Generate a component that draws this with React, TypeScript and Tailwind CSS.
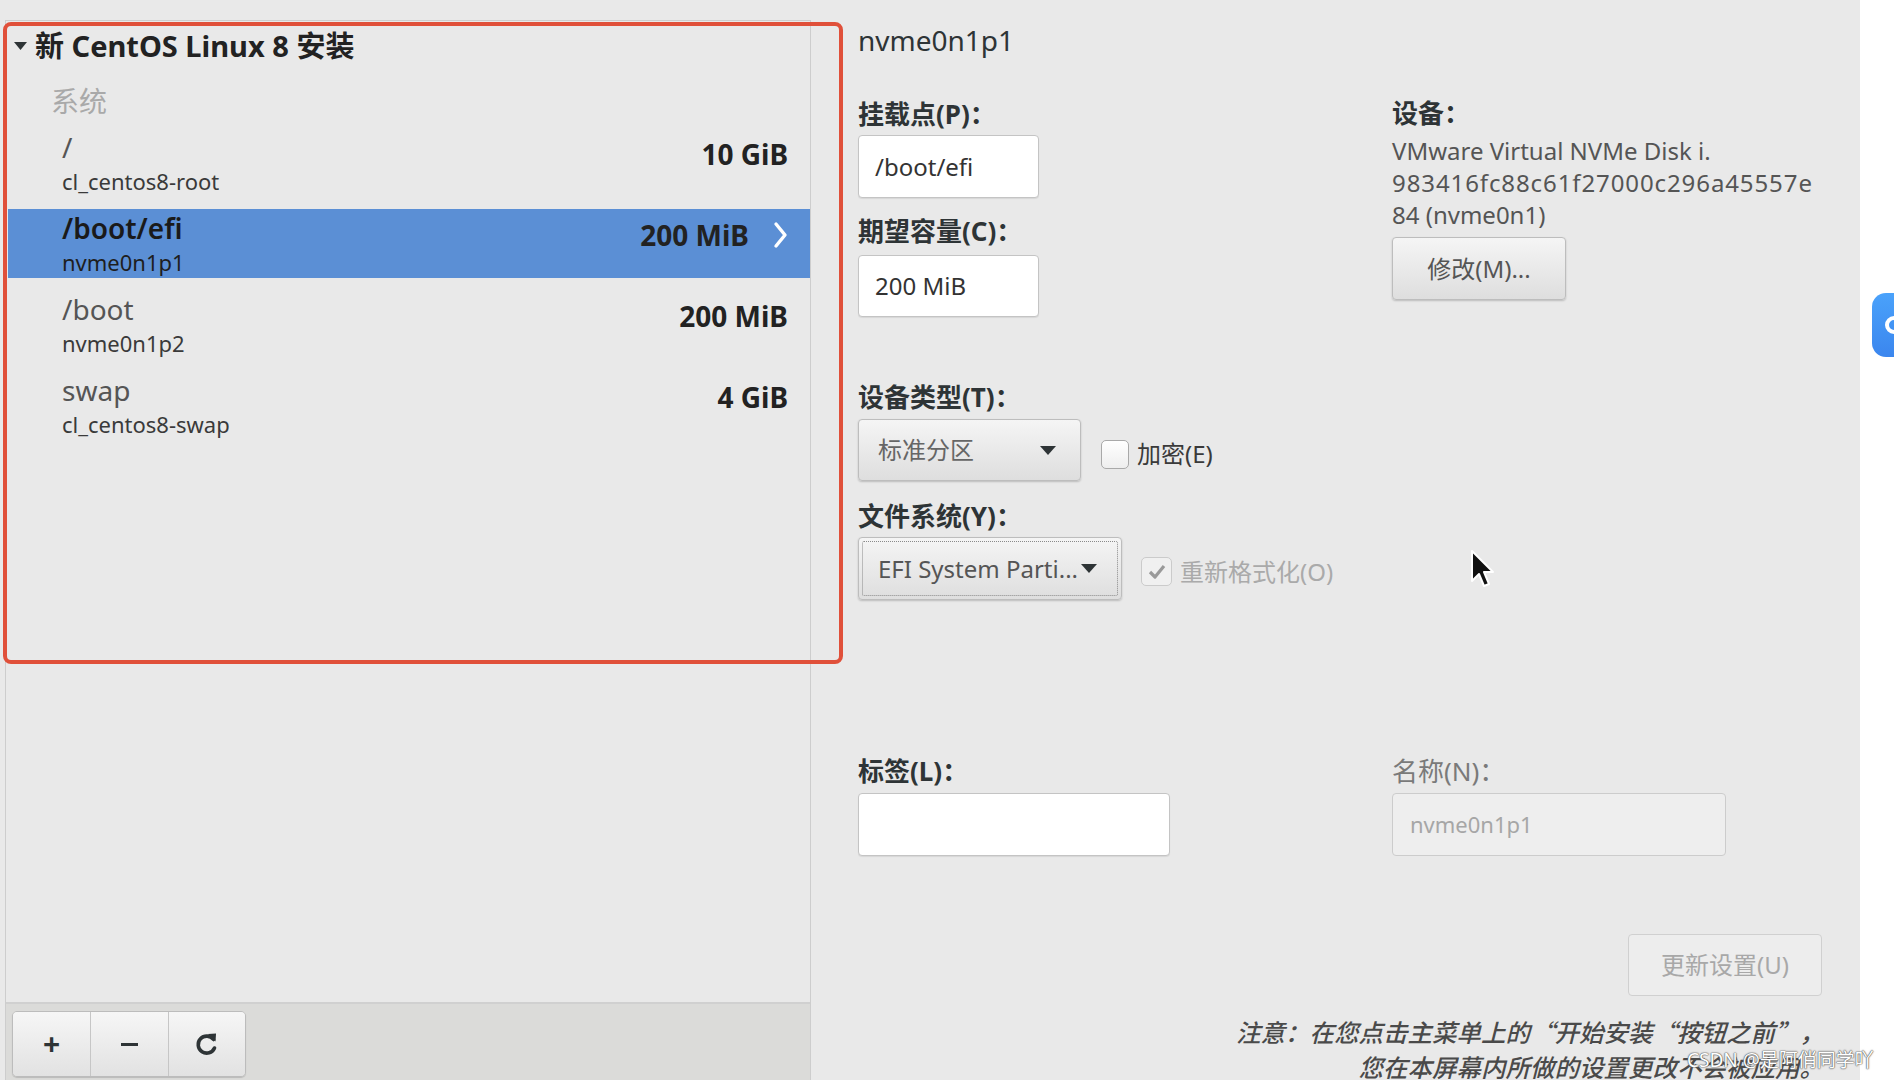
import React from 'react';

type Part = { mount: string; dev: string; size: string; selected?: boolean };

const parts: Part[] = [
  { mount: '/', dev: 'cl_centos8-root', size: '10 GiB' },
  { mount: '/boot/efi', dev: 'nvme0n1p1', size: '200 MiB', selected: true },
  { mount: '/boot', dev: 'nvme0n1p2', size: '200 MiB' },
  { mount: 'swap', dev: 'cl_centos8-swap', size: '4 GiB' },
];

function Caret() {
  return (
    <svg width="16" height="9" viewBox="0 0 16 9" className="shrink-0">
      <path d="M0 0 L16 0 L8 9 Z" fill="#2e3436" />
    </svg>
  );
}

function Refresh() {
  return (
    <svg width="24" height="26" viewBox="0 0 24 26" fill="none">
      <path d="M18.5 8.5 A8.5 8.5 0 1 0 19.5 17" stroke="#2e3436" strokeWidth="3.6" strokeLinecap="round" />
      <path d="M13 3 L21 2.5 L20.5 10.5 Z" fill="#2e3436" />
    </svg>
  );
}

export default function App() {
  return (
    <div className="w-[1894px] h-[1080px] relative overflow-hidden flex bg-white font-['Noto_Sans','Noto_Sans_CJK_SC',sans-serif] text-[#2e3436]">
      <div className="w-[1860px] h-full bg-[#e9e9e9] flex">
        {/* left: partition list */}
        <div className="ml-[5px] mt-[20px] w-[806px] h-[1060px] border-l border-t border-r border-[#cdcdcd] flex flex-col">
          <div className="flex-1 flex flex-col">
            <div className="mt-[7px] pl-[8px] h-[36px] flex items-center gap-[8px]">
              <svg width="13" height="8" viewBox="0 0 13 8"><path d="M0 0 L13 0 L6.5 8 Z" fill="#2e3436" /></svg>
              <span className="text-[29px] leading-[36px] font-bold text-[#222]">新 CentOS Linux 8 安装</span>
            </div>
            <div className="mt-[19px] pl-[45px] h-[36px] text-[28px] leading-[36px] text-[#a9a9a9]">系统</div>
            <div className="mt-[9px] ml-[2px] flex flex-col gap-[12px]">
              {parts.map((p) => (
                <div
                  key={p.mount}
                  className={
                    'h-[69px] pl-[54px] pr-[22px] flex justify-between ' +
                    (p.selected ? 'bg-[#5b8fd5]' : '')
                  }
                >
                  <div className="pt-[2px] flex flex-col">
                    <span className={'text-[28px] leading-[34px] ' + (p.selected ? 'font-semibold text-[#1a1a1a]' : 'text-[#555]')}>{p.mount}</span>
                    <span className={'mt-[2px] text-[22px] leading-[30px] ' + (p.selected ? 'text-[#1e1e1e]' : 'text-[#3a3a3a]')}>{p.dev}</span>
                  </div>
                  <div className="pt-[9px] flex items-start">
                    <span className="text-[28px] leading-[34px] font-bold text-[#222]">{p.size}</span>
                    {p.selected && (
                      <svg width="15" height="34" viewBox="0 0 15 34" className="ml-[24px]">
                        <path d="M3 6 L12 17 L3 28" stroke="#fff" strokeWidth="3.4" fill="none" strokeLinecap="round" strokeLinejoin="round" />
                      </svg>
                    )}
                  </div>
                </div>
              ))}
            </div>
          </div>
          <div className="h-[78px] border-t-2 border-[#d0d0d0] bg-[#dbdbd9] pl-[6px] pt-[7px]">
            <div className="flex w-[234px] h-[66px] rounded-[5px] border border-[#bcbcbc] shadow-[0_1px_1px_rgba(0,0,0,0.15)] overflow-hidden">
              <div className="w-[78px] flex items-center justify-center bg-gradient-to-b from-[#f6f6f6] to-[#e2e2e2] border-r border-[#c6c6c6]">
                <span className="text-[30px] font-bold leading-none">+</span>
              </div>
              <div className="w-[78px] flex items-center justify-center bg-gradient-to-b from-[#f6f6f6] to-[#e2e2e2] border-r border-[#c6c6c6]">
                <span className="w-[17px] h-[3px] bg-[#2e3436]" />
              </div>
              <div className="flex-1 flex items-center justify-center bg-gradient-to-b from-[#f6f6f6] to-[#e2e2e2]">
                <Refresh />
              </div>
            </div>
          </div>
        </div>

        {/* right: details */}
        <div className="flex-1 pl-[47px] pr-[36px] flex flex-col">
          <div className="pt-[22px] text-[28px] leading-[36px] text-[#2e3436]">nvme0n1p1</div>
          <div className="mt-[13px] h-[2px] bg-[#d6d6d6]" />

          <div className="grid grid-cols-[534px_1fr]">
            <div className="flex flex-col">
              <div className="mt-[27px] text-[26px] leading-[32px] font-bold">挂载点(P)：</div>
              <div className="mt-[5px] w-[181px] h-[63px] bg-white border border-[#c4c4c4] rounded-[4px] pl-[16px] flex items-center text-[24px] text-[#333] shadow-[0_1px_1px_rgba(0,0,0,0.08)]">/boot/efi</div>
              <div className="mt-[17px] text-[26px] leading-[32px] font-bold">期望容量(C)：</div>
              <div className="mt-[8px] w-[181px] h-[62px] bg-white border border-[#c4c4c4] rounded-[4px] pl-[16px] flex items-center text-[24px] text-[#333] shadow-[0_1px_1px_rgba(0,0,0,0.08)]">200 MiB</div>
            </div>
            <div className="flex flex-col">
              <div className="mt-[26px] text-[26px] leading-[32px] font-bold">设备：</div>
              <div className="mt-[6px] text-[24px] leading-[32px] text-[#555] whitespace-nowrap">
                <div>VMware Virtual NVMe Disk i.</div>
                <div className="tracking-[0.9px]">983416fc88c61f27000c296a45557e</div>
                <div>84 (nvme0n1)</div>
              </div>
              <div className="mt-[6px] w-[174px] h-[63px] rounded-[4px] border border-[#bdbdbd] bg-gradient-to-b from-[#f5f5f5] to-[#dedede] shadow-[0_1px_2px_rgba(0,0,0,0.2)] flex items-center justify-center text-[24px] text-[#555]">修改(M)...</div>
            </div>
          </div>

          <div className="mt-[64px] text-[26px] leading-[32px] font-bold">设备类型(T)：</div>
          <div className="mt-[6px] flex items-center">
            <div className="w-[223px] h-[62px] rounded-[4px] border border-[#bdbdbd] bg-gradient-to-b from-[#f5f5f5] to-[#dedede] shadow-[0_1px_2px_rgba(0,0,0,0.2)] pl-[19px] pr-[24px] flex items-center justify-between">
              <span className="text-[24px] text-[#666]">标准分区</span>
              <Caret />
            </div>
            <div className="mt-[8px] ml-[20px] w-[28px] h-[29px] rounded-[5px] border border-[#a9a9a9] bg-gradient-to-b from-white to-[#eeeeee]" />
            <span className="mt-[8px] ml-[8px] text-[24px] text-[#3a3a3a]">加密(E)</span>
          </div>

          <div className="mt-[19px] text-[26px] leading-[32px] font-bold">文件系统(Y)：</div>
          <div className="mt-[5px] flex items-center">
            <div className="w-[264px] h-[63px] rounded-[4px] border border-[#bdbdbd] bg-gradient-to-b from-[#f5f5f5] to-[#dedede] shadow-[0_1px_2px_rgba(0,0,0,0.2)] p-[3px]">
              <div className="w-full h-full border border-dotted border-[#8a8a8a] rounded-[2px] pl-[15px] pr-[20px] flex items-center justify-between">
                <span className="text-[24px] text-[#555]">EFI System Parti...</span>
                <Caret />
              </div>
            </div>
            <div className="mt-[6px] ml-[19px] w-[31px] h-[29px] rounded-[5px] border border-[#cbcbcb] bg-[#f0f0f0] flex items-center justify-center">
              <svg width="20" height="18" viewBox="0 0 20 18"><path d="M3 9 L8 14 L17 3" stroke="#9a9a9a" strokeWidth="3.2" fill="none" strokeLinejoin="round" /></svg>
            </div>
            <span className="mt-[6px] ml-[8px] text-[24px] text-[#aaaaaa]">重新格式化(O)</span>
          </div>

          <div className="mt-[155px] grid grid-cols-[534px_1fr]">
            <div className="flex flex-col">
              <div className="text-[26px] leading-[32px] font-bold">标签(L)：</div>
              <div className="mt-[6px] w-[312px] h-[63px] bg-white border border-[#c4c4c4] rounded-[4px] shadow-[0_1px_1px_rgba(0,0,0,0.08)]" />
            </div>
            <div className="flex flex-col">
              <div className="text-[26px] leading-[32px] text-[#7a7a7a]">名称(N)：</div>
              <div className="mt-[6px] w-[334px] h-[63px] bg-[#eeeeee] border border-[#cccccc] rounded-[4px] pl-[17px] flex items-center text-[22px] text-[#a6a6a6]">nvme0n1p1</div>
            </div>
          </div>

          <div className="mt-[78px] flex justify-end pr-[2px]">
            <div className="w-[194px] h-[62px] rounded-[4px] border border-[#d0d0d0] bg-[#ededed] flex items-center justify-center text-[24px] text-[#a8a8a8]">更新设置(U)</div>
          </div>
          <div className="mt-[18px] text-right italic font-medium text-[24.5px] leading-[35px] text-[#4a4a4a] whitespace-nowrap font-['Noto_Sans_CJK_SC',sans-serif]">
            <div>注意：在您点击主菜单上的“开始安装“按钮之前”，</div>
            <div>您在本屏幕内所做的设置更改不会被应用。</div>
          </div>
        </div>
      </div>

      {/* right edge strip */}
      <div className="flex-1 bg-white relative">
        <div className="absolute left-[12px] top-[293px] w-[30px] h-[64px] rounded-l-[14px] bg-gradient-to-b from-[#4aa2fb] to-[#3b86ee] overflow-hidden">
          <div className="absolute left-[13px] top-[23px] w-[18px] h-[18px] rounded-full border-[4px] border-white" />
        </div>
      </div>

      {/* annotation box */}
      <div className="absolute left-[3px] top-[22px] w-[840px] h-[642px] border-[4px] border-[#e0503a] rounded-[8px] pointer-events-none" />

      {/* mouse cursor */}
      <svg className="absolute left-[1470px] top-[549px]" width="26" height="40" viewBox="0 0 26 40">
        <path d="M2 2 L2 32 L9 25 L14 37 L19 35 L14 23 L23 23 Z" fill="#111" stroke="#fff" strokeWidth="2" strokeLinejoin="round" />
      </svg>

      {/* watermark */}
      <div className="absolute left-[1687px] top-[1046px] text-[19px] leading-[28px] text-white whitespace-nowrap [text-shadow:0_0_1px_#555,0_0_1px_#555,0_0_2px_#777]">CSDN @是阿俏同学吖</div>
    </div>
  );
}
